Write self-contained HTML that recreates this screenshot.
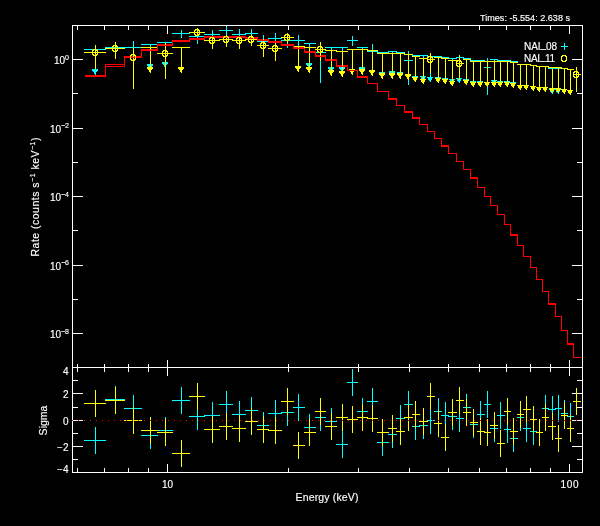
<!DOCTYPE html>
<html><head><meta charset="utf-8"><title>Spectrum</title>
<style>html,body{margin:0;padding:0;background:#000;}svg{display:block;}</style></head>
<body><svg width="600" height="526" viewBox="0 0 600 526">
<rect width="600" height="526" fill="#000"/>
<g shape-rendering="crispEdges">
<rect x="72.5" y="25.5" width="510" height="447" fill="none" stroke="#ffffff"/>
<line x1="72.0" y1="367.5" x2="583.0" y2="367.5" stroke="#ffffff" stroke-width="1"/>
<line x1="77.5" y1="25.0" x2="77.5" y2="30.0" stroke="#ffffff" stroke-width="1"/>
<line x1="77.5" y1="468.0" x2="77.5" y2="472.0" stroke="#ffffff" stroke-width="1"/>
<line x1="77.5" y1="364.0" x2="77.5" y2="372.0" stroke="#ffffff" stroke-width="1"/>
<line x1="104.5" y1="25.0" x2="104.5" y2="30.0" stroke="#ffffff" stroke-width="1"/>
<line x1="104.5" y1="468.0" x2="104.5" y2="472.0" stroke="#ffffff" stroke-width="1"/>
<line x1="104.5" y1="364.0" x2="104.5" y2="372.0" stroke="#ffffff" stroke-width="1"/>
<line x1="128.5" y1="25.0" x2="128.5" y2="30.0" stroke="#ffffff" stroke-width="1"/>
<line x1="128.5" y1="468.0" x2="128.5" y2="472.0" stroke="#ffffff" stroke-width="1"/>
<line x1="128.5" y1="364.0" x2="128.5" y2="372.0" stroke="#ffffff" stroke-width="1"/>
<line x1="148.5" y1="25.0" x2="148.5" y2="30.0" stroke="#ffffff" stroke-width="1"/>
<line x1="148.5" y1="468.0" x2="148.5" y2="472.0" stroke="#ffffff" stroke-width="1"/>
<line x1="148.5" y1="364.0" x2="148.5" y2="372.0" stroke="#ffffff" stroke-width="1"/>
<line x1="167.5" y1="25.0" x2="167.5" y2="34.0" stroke="#ffffff" stroke-width="1"/>
<line x1="167.5" y1="464.0" x2="167.5" y2="472.0" stroke="#ffffff" stroke-width="1"/>
<line x1="167.5" y1="360.0" x2="167.5" y2="376.0" stroke="#ffffff" stroke-width="1"/>
<line x1="288.5" y1="25.0" x2="288.5" y2="30.0" stroke="#ffffff" stroke-width="1"/>
<line x1="288.5" y1="468.0" x2="288.5" y2="472.0" stroke="#ffffff" stroke-width="1"/>
<line x1="288.5" y1="364.0" x2="288.5" y2="372.0" stroke="#ffffff" stroke-width="1"/>
<line x1="358.5" y1="25.0" x2="358.5" y2="30.0" stroke="#ffffff" stroke-width="1"/>
<line x1="358.5" y1="468.0" x2="358.5" y2="472.0" stroke="#ffffff" stroke-width="1"/>
<line x1="358.5" y1="364.0" x2="358.5" y2="372.0" stroke="#ffffff" stroke-width="1"/>
<line x1="409.5" y1="25.0" x2="409.5" y2="30.0" stroke="#ffffff" stroke-width="1"/>
<line x1="409.5" y1="468.0" x2="409.5" y2="472.0" stroke="#ffffff" stroke-width="1"/>
<line x1="409.5" y1="364.0" x2="409.5" y2="372.0" stroke="#ffffff" stroke-width="1"/>
<line x1="448.5" y1="25.0" x2="448.5" y2="30.0" stroke="#ffffff" stroke-width="1"/>
<line x1="448.5" y1="468.0" x2="448.5" y2="472.0" stroke="#ffffff" stroke-width="1"/>
<line x1="448.5" y1="364.0" x2="448.5" y2="372.0" stroke="#ffffff" stroke-width="1"/>
<line x1="479.5" y1="25.0" x2="479.5" y2="30.0" stroke="#ffffff" stroke-width="1"/>
<line x1="479.5" y1="468.0" x2="479.5" y2="472.0" stroke="#ffffff" stroke-width="1"/>
<line x1="479.5" y1="364.0" x2="479.5" y2="372.0" stroke="#ffffff" stroke-width="1"/>
<line x1="506.5" y1="25.0" x2="506.5" y2="30.0" stroke="#ffffff" stroke-width="1"/>
<line x1="506.5" y1="468.0" x2="506.5" y2="472.0" stroke="#ffffff" stroke-width="1"/>
<line x1="506.5" y1="364.0" x2="506.5" y2="372.0" stroke="#ffffff" stroke-width="1"/>
<line x1="530.5" y1="25.0" x2="530.5" y2="30.0" stroke="#ffffff" stroke-width="1"/>
<line x1="530.5" y1="468.0" x2="530.5" y2="472.0" stroke="#ffffff" stroke-width="1"/>
<line x1="530.5" y1="364.0" x2="530.5" y2="372.0" stroke="#ffffff" stroke-width="1"/>
<line x1="550.5" y1="25.0" x2="550.5" y2="30.0" stroke="#ffffff" stroke-width="1"/>
<line x1="550.5" y1="468.0" x2="550.5" y2="472.0" stroke="#ffffff" stroke-width="1"/>
<line x1="550.5" y1="364.0" x2="550.5" y2="372.0" stroke="#ffffff" stroke-width="1"/>
<line x1="569.5" y1="25.0" x2="569.5" y2="34.0" stroke="#ffffff" stroke-width="1"/>
<line x1="569.5" y1="464.0" x2="569.5" y2="472.0" stroke="#ffffff" stroke-width="1"/>
<line x1="569.5" y1="360.0" x2="569.5" y2="376.0" stroke="#ffffff" stroke-width="1"/>
<line x1="72.0" y1="333.5" x2="83.0" y2="333.5" stroke="#ffffff" stroke-width="1"/>
<line x1="572.0" y1="333.5" x2="583.0" y2="333.5" stroke="#ffffff" stroke-width="1"/>
<line x1="72.0" y1="299.5" x2="78.0" y2="299.5" stroke="#ffffff" stroke-width="1"/>
<line x1="577.0" y1="299.5" x2="583.0" y2="299.5" stroke="#ffffff" stroke-width="1"/>
<line x1="72.0" y1="265.5" x2="83.0" y2="265.5" stroke="#ffffff" stroke-width="1"/>
<line x1="572.0" y1="265.5" x2="583.0" y2="265.5" stroke="#ffffff" stroke-width="1"/>
<line x1="72.0" y1="230.5" x2="78.0" y2="230.5" stroke="#ffffff" stroke-width="1"/>
<line x1="577.0" y1="230.5" x2="583.0" y2="230.5" stroke="#ffffff" stroke-width="1"/>
<line x1="72.0" y1="196.5" x2="83.0" y2="196.5" stroke="#ffffff" stroke-width="1"/>
<line x1="572.0" y1="196.5" x2="583.0" y2="196.5" stroke="#ffffff" stroke-width="1"/>
<line x1="72.0" y1="162.5" x2="78.0" y2="162.5" stroke="#ffffff" stroke-width="1"/>
<line x1="577.0" y1="162.5" x2="583.0" y2="162.5" stroke="#ffffff" stroke-width="1"/>
<line x1="72.0" y1="128.5" x2="83.0" y2="128.5" stroke="#ffffff" stroke-width="1"/>
<line x1="572.0" y1="128.5" x2="583.0" y2="128.5" stroke="#ffffff" stroke-width="1"/>
<line x1="72.0" y1="93.5" x2="78.0" y2="93.5" stroke="#ffffff" stroke-width="1"/>
<line x1="577.0" y1="93.5" x2="583.0" y2="93.5" stroke="#ffffff" stroke-width="1"/>
<line x1="72.0" y1="59.5" x2="83.0" y2="59.5" stroke="#ffffff" stroke-width="1"/>
<line x1="572.0" y1="59.5" x2="583.0" y2="59.5" stroke="#ffffff" stroke-width="1"/>
<line x1="72.0" y1="459.5" x2="78.0" y2="459.5" stroke="#ffffff" stroke-width="1"/>
<line x1="577.0" y1="459.5" x2="583.0" y2="459.5" stroke="#ffffff" stroke-width="1"/>
<line x1="72.0" y1="446.5" x2="83.0" y2="446.5" stroke="#ffffff" stroke-width="1"/>
<line x1="572.0" y1="446.5" x2="583.0" y2="446.5" stroke="#ffffff" stroke-width="1"/>
<line x1="72.0" y1="433.5" x2="78.0" y2="433.5" stroke="#ffffff" stroke-width="1"/>
<line x1="577.0" y1="433.5" x2="583.0" y2="433.5" stroke="#ffffff" stroke-width="1"/>
<line x1="72.0" y1="420.5" x2="83.0" y2="420.5" stroke="#ffffff" stroke-width="1"/>
<line x1="572.0" y1="420.5" x2="583.0" y2="420.5" stroke="#ffffff" stroke-width="1"/>
<line x1="72.0" y1="407.5" x2="78.0" y2="407.5" stroke="#ffffff" stroke-width="1"/>
<line x1="577.0" y1="407.5" x2="583.0" y2="407.5" stroke="#ffffff" stroke-width="1"/>
<line x1="72.0" y1="393.5" x2="83.0" y2="393.5" stroke="#ffffff" stroke-width="1"/>
<line x1="572.0" y1="393.5" x2="583.0" y2="393.5" stroke="#ffffff" stroke-width="1"/>
<line x1="72.0" y1="380.5" x2="78.0" y2="380.5" stroke="#ffffff" stroke-width="1"/>
<line x1="577.0" y1="380.5" x2="583.0" y2="380.5" stroke="#ffffff" stroke-width="1"/>
</g>
<g shape-rendering="crispEdges">
<line x1="84.0" y1="49.5" x2="106.0" y2="49.5" stroke="#00ffff" stroke-width="1"/>
<line x1="95.5" y1="49.0" x2="95.5" y2="75.0" stroke="#00ffff" stroke-width="1"/>
<polygon points="91.6,69 98.4,69 95,75.2" fill="#00ffff"/>
<line x1="105.0" y1="47.5" x2="125.0" y2="47.5" stroke="#00ffff" stroke-width="1"/>
<line x1="115.5" y1="42.0" x2="115.5" y2="56.0" stroke="#00ffff" stroke-width="1"/>
<line x1="124.0" y1="47.5" x2="142.0" y2="47.5" stroke="#00ffff" stroke-width="1"/>
<line x1="133.5" y1="40.8" x2="133.5" y2="60.0" stroke="#00ffff" stroke-width="1"/>
<line x1="141.0" y1="44.5" x2="158.0" y2="44.5" stroke="#00ffff" stroke-width="1"/>
<line x1="150.5" y1="44.0" x2="150.5" y2="70.0" stroke="#00ffff" stroke-width="1"/>
<polygon points="146.6,64 153.4,64 150,70.2" fill="#00ffff"/>
<line x1="157.0" y1="42.5" x2="173.0" y2="42.5" stroke="#00ffff" stroke-width="1"/>
<line x1="165.5" y1="42.0" x2="165.5" y2="68.0" stroke="#00ffff" stroke-width="1"/>
<polygon points="161.6,62 168.4,62 165,68.2" fill="#00ffff"/>
<line x1="172.0" y1="33.5" x2="190.0" y2="33.5" stroke="#00ffff" stroke-width="1"/>
<line x1="181.5" y1="30.0" x2="181.5" y2="37.5" stroke="#00ffff" stroke-width="1"/>
<line x1="189.0" y1="36.5" x2="205.0" y2="36.5" stroke="#00ffff" stroke-width="1"/>
<line x1="197.5" y1="29.0" x2="197.5" y2="43.7" stroke="#00ffff" stroke-width="1"/>
<line x1="204.0" y1="34.5" x2="220.0" y2="34.5" stroke="#00ffff" stroke-width="1"/>
<line x1="212.5" y1="30.0" x2="212.5" y2="39.0" stroke="#00ffff" stroke-width="1"/>
<line x1="219.0" y1="30.5" x2="233.0" y2="30.5" stroke="#00ffff" stroke-width="1"/>
<line x1="226.5" y1="25.8" x2="226.5" y2="35.0" stroke="#00ffff" stroke-width="1"/>
<line x1="232.0" y1="34.5" x2="246.0" y2="34.5" stroke="#00ffff" stroke-width="1"/>
<line x1="239.5" y1="28.7" x2="239.5" y2="39.0" stroke="#00ffff" stroke-width="1"/>
<line x1="245.0" y1="33.5" x2="258.0" y2="33.5" stroke="#00ffff" stroke-width="1"/>
<line x1="251.5" y1="29.2" x2="251.5" y2="37.5" stroke="#00ffff" stroke-width="1"/>
<line x1="257.0" y1="41.5" x2="269.0" y2="41.5" stroke="#00ffff" stroke-width="1"/>
<line x1="263.5" y1="35.0" x2="263.5" y2="50.0" stroke="#00ffff" stroke-width="1"/>
<line x1="268.0" y1="38.5" x2="282.0" y2="38.5" stroke="#00ffff" stroke-width="1"/>
<line x1="275.5" y1="32.5" x2="275.5" y2="45.0" stroke="#00ffff" stroke-width="1"/>
<line x1="281.0" y1="40.5" x2="294.0" y2="40.5" stroke="#00ffff" stroke-width="1"/>
<line x1="287.5" y1="36.0" x2="287.5" y2="48.3" stroke="#00ffff" stroke-width="1"/>
<line x1="293.0" y1="40.5" x2="305.0" y2="40.5" stroke="#00ffff" stroke-width="1"/>
<line x1="298.5" y1="35.0" x2="298.5" y2="48.0" stroke="#00ffff" stroke-width="1"/>
<line x1="304.0" y1="43.5" x2="316.0" y2="43.5" stroke="#00ffff" stroke-width="1"/>
<line x1="309.5" y1="43.0" x2="309.5" y2="69.0" stroke="#00ffff" stroke-width="1"/>
<polygon points="305.6,63 312.4,63 309,69.2" fill="#00ffff"/>
<line x1="315.0" y1="52.5" x2="326.0" y2="52.5" stroke="#00ffff" stroke-width="1"/>
<line x1="320.5" y1="42.0" x2="320.5" y2="82.5" stroke="#00ffff" stroke-width="1"/>
<line x1="325.0" y1="47.5" x2="337.0" y2="47.5" stroke="#00ffff" stroke-width="1"/>
<line x1="331.5" y1="47.0" x2="331.5" y2="73.0" stroke="#00ffff" stroke-width="1"/>
<polygon points="327.6,67 334.4,67 331,73.2" fill="#00ffff"/>
<line x1="336.0" y1="47.5" x2="348.0" y2="47.5" stroke="#00ffff" stroke-width="1"/>
<line x1="342.5" y1="47.0" x2="342.5" y2="73.0" stroke="#00ffff" stroke-width="1"/>
<polygon points="338.6,67 345.4,67 342,73.2" fill="#00ffff"/>
<line x1="347.0" y1="40.5" x2="358.0" y2="40.5" stroke="#00ffff" stroke-width="1"/>
<line x1="352.5" y1="36.0" x2="352.5" y2="46.0" stroke="#00ffff" stroke-width="1"/>
<line x1="357.0" y1="47.5" x2="368.0" y2="47.5" stroke="#00ffff" stroke-width="1"/>
<line x1="362.5" y1="47.0" x2="362.5" y2="73.0" stroke="#00ffff" stroke-width="1"/>
<polygon points="358.6,67 365.4,67 362,73.2" fill="#00ffff"/>
<line x1="367.0" y1="51.5" x2="378.0" y2="51.5" stroke="#00ffff" stroke-width="1"/>
<line x1="372.5" y1="44.0" x2="372.5" y2="65.0" stroke="#00ffff" stroke-width="1"/>
<line x1="377.0" y1="52.5" x2="389.0" y2="52.5" stroke="#00ffff" stroke-width="1"/>
<line x1="382.5" y1="52.0" x2="382.5" y2="78.0" stroke="#00ffff" stroke-width="1"/>
<polygon points="378.6,72 385.4,72 382,78.2" fill="#00ffff"/>
<line x1="388.0" y1="51.5" x2="397.0" y2="51.5" stroke="#00ffff" stroke-width="1"/>
<line x1="392.5" y1="51.0" x2="392.5" y2="77.0" stroke="#00ffff" stroke-width="1"/>
<polygon points="388.6,71 395.4,71 392,77.2" fill="#00ffff"/>
<line x1="396.0" y1="52.5" x2="405.0" y2="52.5" stroke="#00ffff" stroke-width="1"/>
<line x1="400.5" y1="52.0" x2="400.5" y2="78.0" stroke="#00ffff" stroke-width="1"/>
<polygon points="396.6,72 403.4,72 400,78.2" fill="#00ffff"/>
<line x1="404.0" y1="60.5" x2="413.0" y2="60.5" stroke="#00ffff" stroke-width="1"/>
<line x1="408.5" y1="51.0" x2="408.5" y2="85.0" stroke="#00ffff" stroke-width="1"/>
<line x1="412.0" y1="55.5" x2="420.0" y2="55.5" stroke="#00ffff" stroke-width="1"/>
<line x1="415.5" y1="55.0" x2="415.5" y2="81.0" stroke="#00ffff" stroke-width="1"/>
<polygon points="411.6,76 418.4,76 415,81.2" fill="#00ffff"/>
<line x1="419.0" y1="55.5" x2="428.0" y2="55.5" stroke="#00ffff" stroke-width="1"/>
<line x1="423.5" y1="55.0" x2="423.5" y2="81.0" stroke="#00ffff" stroke-width="1"/>
<polygon points="419.6,76 426.4,76 423,81.2" fill="#00ffff"/>
<line x1="427.0" y1="56.5" x2="435.0" y2="56.5" stroke="#00ffff" stroke-width="1"/>
<line x1="430.5" y1="56.0" x2="430.5" y2="82.0" stroke="#00ffff" stroke-width="1"/>
<polygon points="426.6,77 433.4,77 430,82.2" fill="#00ffff"/>
<line x1="434.0" y1="56.5" x2="442.0" y2="56.5" stroke="#00ffff" stroke-width="1"/>
<line x1="438.5" y1="56.0" x2="438.5" y2="82.0" stroke="#00ffff" stroke-width="1"/>
<polygon points="434.6,77 441.4,77 438,82.2" fill="#00ffff"/>
<line x1="441.0" y1="57.5" x2="449.0" y2="57.5" stroke="#00ffff" stroke-width="1"/>
<line x1="445.5" y1="57.0" x2="445.5" y2="83.0" stroke="#00ffff" stroke-width="1"/>
<polygon points="441.6,78 448.4,78 445,83.2" fill="#00ffff"/>
<line x1="448.0" y1="58.5" x2="457.0" y2="58.5" stroke="#00ffff" stroke-width="1"/>
<line x1="452.5" y1="58.0" x2="452.5" y2="84.0" stroke="#00ffff" stroke-width="1"/>
<polygon points="448.6,79 455.4,79 452,84.2" fill="#00ffff"/>
<line x1="456.0" y1="57.5" x2="464.0" y2="57.5" stroke="#00ffff" stroke-width="1"/>
<line x1="459.5" y1="57.0" x2="459.5" y2="83.0" stroke="#00ffff" stroke-width="1"/>
<polygon points="455.6,78 462.4,78 459,83.2" fill="#00ffff"/>
<line x1="463.0" y1="58.5" x2="471.0" y2="58.5" stroke="#00ffff" stroke-width="1"/>
<line x1="466.5" y1="58.0" x2="466.5" y2="84.0" stroke="#00ffff" stroke-width="1"/>
<polygon points="462.6,79 469.4,79 466,84.2" fill="#00ffff"/>
<line x1="470.0" y1="60.5" x2="478.0" y2="60.5" stroke="#00ffff" stroke-width="1"/>
<line x1="473.5" y1="60.0" x2="473.5" y2="86.0" stroke="#00ffff" stroke-width="1"/>
<polygon points="469.6,81 476.4,81 473,86.2" fill="#00ffff"/>
<line x1="477.0" y1="60.5" x2="485.0" y2="60.5" stroke="#00ffff" stroke-width="1"/>
<line x1="480.5" y1="60.0" x2="480.5" y2="86.0" stroke="#00ffff" stroke-width="1"/>
<polygon points="476.6,81 483.4,81 480,86.2" fill="#00ffff"/>
<line x1="484.0" y1="67.5" x2="491.0" y2="67.5" stroke="#00ffff" stroke-width="1"/>
<line x1="487.5" y1="58.0" x2="487.5" y2="95.0" stroke="#00ffff" stroke-width="1"/>
<line x1="490.0" y1="59.5" x2="498.0" y2="59.5" stroke="#00ffff" stroke-width="1"/>
<line x1="494.5" y1="59.0" x2="494.5" y2="85.0" stroke="#00ffff" stroke-width="1"/>
<polygon points="490.6,80 497.4,80 494,85.2" fill="#00ffff"/>
<line x1="497.0" y1="60.5" x2="505.0" y2="60.5" stroke="#00ffff" stroke-width="1"/>
<line x1="500.5" y1="60.0" x2="500.5" y2="86.0" stroke="#00ffff" stroke-width="1"/>
<polygon points="496.6,81 503.4,81 500,86.2" fill="#00ffff"/>
<line x1="504.0" y1="60.5" x2="511.0" y2="60.5" stroke="#00ffff" stroke-width="1"/>
<line x1="507.5" y1="60.0" x2="507.5" y2="86.0" stroke="#00ffff" stroke-width="1"/>
<polygon points="503.6,81 510.4,81 507,86.2" fill="#00ffff"/>
<line x1="510.0" y1="61.5" x2="518.0" y2="61.5" stroke="#00ffff" stroke-width="1"/>
<line x1="513.5" y1="61.0" x2="513.5" y2="87.0" stroke="#00ffff" stroke-width="1"/>
<polygon points="509.6,82 516.4,82 513,87.2" fill="#00ffff"/>
<line x1="517.0" y1="64.5" x2="524.0" y2="64.5" stroke="#00ffff" stroke-width="1"/>
<line x1="520.5" y1="64.0" x2="520.5" y2="90.0" stroke="#00ffff" stroke-width="1"/>
<polygon points="516.6,85 523.4,85 520,90.2" fill="#00ffff"/>
<line x1="523.0" y1="64.5" x2="531.0" y2="64.5" stroke="#00ffff" stroke-width="1"/>
<line x1="526.5" y1="64.0" x2="526.5" y2="90.0" stroke="#00ffff" stroke-width="1"/>
<polygon points="522.6,85 529.4,85 526,90.2" fill="#00ffff"/>
<line x1="530.0" y1="65.5" x2="537.0" y2="65.5" stroke="#00ffff" stroke-width="1"/>
<line x1="533.5" y1="65.0" x2="533.5" y2="91.0" stroke="#00ffff" stroke-width="1"/>
<polygon points="529.6,86 536.4,86 533,91.2" fill="#00ffff"/>
<line x1="536.0" y1="66.5" x2="543.0" y2="66.5" stroke="#00ffff" stroke-width="1"/>
<line x1="539.5" y1="66.0" x2="539.5" y2="92.0" stroke="#00ffff" stroke-width="1"/>
<polygon points="535.6,87 542.4,87 539,92.2" fill="#00ffff"/>
<line x1="542.0" y1="66.5" x2="549.0" y2="66.5" stroke="#00ffff" stroke-width="1"/>
<line x1="545.5" y1="66.0" x2="545.5" y2="92.0" stroke="#00ffff" stroke-width="1"/>
<polygon points="541.6,87 548.4,87 545,92.2" fill="#00ffff"/>
<line x1="548.0" y1="68.5" x2="556.0" y2="68.5" stroke="#00ffff" stroke-width="1"/>
<line x1="552.5" y1="68.0" x2="552.5" y2="94.0" stroke="#00ffff" stroke-width="1"/>
<polygon points="548.6,89 555.4,89 552,94.2" fill="#00ffff"/>
<line x1="555.0" y1="68.5" x2="562.0" y2="68.5" stroke="#00ffff" stroke-width="1"/>
<line x1="558.5" y1="68.0" x2="558.5" y2="94.0" stroke="#00ffff" stroke-width="1"/>
<polygon points="554.6,89 561.4,89 558,94.2" fill="#00ffff"/>
<line x1="561.0" y1="68.5" x2="568.0" y2="68.5" stroke="#00ffff" stroke-width="1"/>
<line x1="564.5" y1="68.0" x2="564.5" y2="94.0" stroke="#00ffff" stroke-width="1"/>
<polygon points="560.6,89 567.4,89 564,94.2" fill="#00ffff"/>
<line x1="567.0" y1="69.5" x2="574.0" y2="69.5" stroke="#00ffff" stroke-width="1"/>
<line x1="570.5" y1="69.0" x2="570.5" y2="95.0" stroke="#00ffff" stroke-width="1"/>
<polygon points="566.6,90 573.4,90 570,95.2" fill="#00ffff"/>
<polyline points="84.5,75.5 105.5,75.5 105.5,64.5 124.5,64.5 124.5,56.5 141.5,56.5 141.5,49.5 157.5,49.5 157.5,44.5 172.5,44.5 172.5,40.5 189.5,40.5 189.5,38.5 204.5,38.5 204.5,36.5 219.5,36.5 219.5,36.5 232.5,36.5 232.5,36.5 245.5,36.5 245.5,37.5 257.5,37.5 257.5,39.5 268.5,39.5 268.5,41.5 281.5,41.5 281.5,44.5 293.5,44.5 293.5,47.5 304.5,47.5 304.5,51.5 315.5,51.5 315.5,55.5 325.5,55.5 325.5,59.5 336.5,59.5 336.5,65.5 347.5,65.5 347.5,70.5 357.5,70.5 357.5,76.5 367.5,76.5 367.5,83.5 377.5,83.5 377.5,91.5 388.5,91.5 388.5,98.5 396.5,98.5 396.5,105.5 404.5,105.5 404.5,111.5 412.5,111.5 412.5,117.5 419.5,117.5 419.5,124.5 427.5,124.5 427.5,131.5 434.5,131.5 434.5,138.5 441.5,138.5 441.5,145.5 448.5,145.5 448.5,153.5 456.5,153.5 456.5,161.5 463.5,161.5 463.5,169.5 470.5,169.5 470.5,177.5 477.5,177.5 477.5,187.5 484.5,187.5 484.5,196.5 490.5,196.5 490.5,205.5 497.5,205.5 497.5,214.5 504.5,214.5 504.5,224.5 510.5,224.5 510.5,234.5 517.5,234.5 517.5,245.5 523.5,245.5 523.5,256.5 530.5,256.5 530.5,267.5 536.5,267.5 536.5,279.5 542.5,279.5 542.5,291.5 548.5,291.5 548.5,303.5 555.5,303.5 555.5,316.5 561.5,316.5 561.5,330.5 567.5,330.5 567.5,343.5 573.5,343.5 573.5,357.5 580.5,357.5" fill="none" stroke="#ff0000" stroke-width="1" shape-rendering="crispEdges"/>
<line x1="84.0" y1="52.5" x2="106.0" y2="52.5" stroke="#ffff00" stroke-width="1"/>
<line x1="95.5" y1="45.0" x2="95.5" y2="69.0" stroke="#ffff00" stroke-width="1"/>
<line x1="105.0" y1="48.5" x2="125.0" y2="48.5" stroke="#ffff00" stroke-width="1"/>
<line x1="115.5" y1="41.7" x2="115.5" y2="58.8" stroke="#ffff00" stroke-width="1"/>
<line x1="124.0" y1="57.5" x2="142.0" y2="57.5" stroke="#ffff00" stroke-width="1"/>
<line x1="133.5" y1="47.5" x2="133.5" y2="88.8" stroke="#ffff00" stroke-width="1"/>
<line x1="141.0" y1="47.5" x2="158.0" y2="47.5" stroke="#ffff00" stroke-width="1"/>
<line x1="150.5" y1="47.0" x2="150.5" y2="73.0" stroke="#ffff00" stroke-width="1"/>
<polygon points="146.6,67 153.4,67 150,73.2" fill="#ffff00"/>
<line x1="157.0" y1="53.5" x2="173.0" y2="53.5" stroke="#ffff00" stroke-width="1"/>
<line x1="165.5" y1="42.5" x2="165.5" y2="78.7" stroke="#ffff00" stroke-width="1"/>
<line x1="172.0" y1="47.5" x2="190.0" y2="47.5" stroke="#ffff00" stroke-width="1"/>
<line x1="181.5" y1="47.0" x2="181.5" y2="73.0" stroke="#ffff00" stroke-width="1"/>
<polygon points="177.6,67 184.4,67 181,73.2" fill="#ffff00"/>
<line x1="189.0" y1="32.5" x2="205.0" y2="32.5" stroke="#ffff00" stroke-width="1"/>
<line x1="197.5" y1="28.0" x2="197.5" y2="36.0" stroke="#ffff00" stroke-width="1"/>
<line x1="204.0" y1="40.5" x2="220.0" y2="40.5" stroke="#ffff00" stroke-width="1"/>
<line x1="212.5" y1="36.7" x2="212.5" y2="48.7" stroke="#ffff00" stroke-width="1"/>
<line x1="219.0" y1="39.5" x2="233.0" y2="39.5" stroke="#ffff00" stroke-width="1"/>
<line x1="226.5" y1="35.0" x2="226.5" y2="46.7" stroke="#ffff00" stroke-width="1"/>
<line x1="232.0" y1="40.5" x2="246.0" y2="40.5" stroke="#ffff00" stroke-width="1"/>
<line x1="239.5" y1="36.7" x2="239.5" y2="48.7" stroke="#ffff00" stroke-width="1"/>
<line x1="245.0" y1="39.5" x2="258.0" y2="39.5" stroke="#ffff00" stroke-width="1"/>
<line x1="251.5" y1="35.0" x2="251.5" y2="45.8" stroke="#ffff00" stroke-width="1"/>
<line x1="257.0" y1="45.5" x2="269.0" y2="45.5" stroke="#ffff00" stroke-width="1"/>
<line x1="263.5" y1="39.2" x2="263.5" y2="56.7" stroke="#ffff00" stroke-width="1"/>
<line x1="268.0" y1="48.5" x2="282.0" y2="48.5" stroke="#ffff00" stroke-width="1"/>
<line x1="275.5" y1="41.7" x2="275.5" y2="60.8" stroke="#ffff00" stroke-width="1"/>
<line x1="281.0" y1="37.5" x2="294.0" y2="37.5" stroke="#ffff00" stroke-width="1"/>
<line x1="287.5" y1="32.5" x2="287.5" y2="43.0" stroke="#ffff00" stroke-width="1"/>
<line x1="293.0" y1="46.5" x2="305.0" y2="46.5" stroke="#ffff00" stroke-width="1"/>
<line x1="298.5" y1="46.0" x2="298.5" y2="72.0" stroke="#ffff00" stroke-width="1"/>
<polygon points="294.6,66 301.4,66 298,72.2" fill="#ffff00"/>
<line x1="304.0" y1="47.5" x2="316.0" y2="47.5" stroke="#ffff00" stroke-width="1"/>
<line x1="309.5" y1="47.0" x2="309.5" y2="73.0" stroke="#ffff00" stroke-width="1"/>
<polygon points="305.6,67 312.4,67 309,73.2" fill="#ffff00"/>
<line x1="315.0" y1="49.5" x2="326.0" y2="49.5" stroke="#ffff00" stroke-width="1"/>
<line x1="320.5" y1="41.7" x2="320.5" y2="60.8" stroke="#ffff00" stroke-width="1"/>
<line x1="325.0" y1="50.5" x2="337.0" y2="50.5" stroke="#ffff00" stroke-width="1"/>
<line x1="331.5" y1="50.0" x2="331.5" y2="76.0" stroke="#ffff00" stroke-width="1"/>
<polygon points="327.6,70 334.4,70 331,76.2" fill="#ffff00"/>
<line x1="336.0" y1="51.5" x2="348.0" y2="51.5" stroke="#ffff00" stroke-width="1"/>
<line x1="342.5" y1="51.0" x2="342.5" y2="77.0" stroke="#ffff00" stroke-width="1"/>
<polygon points="338.6,71 345.4,71 342,77.2" fill="#ffff00"/>
<line x1="347.0" y1="49.5" x2="358.0" y2="49.5" stroke="#ffff00" stroke-width="1"/>
<line x1="352.5" y1="49.0" x2="352.5" y2="75.0" stroke="#ffff00" stroke-width="1"/>
<polygon points="348.6,69 355.4,69 352,75.2" fill="#ffff00"/>
<line x1="357.0" y1="49.5" x2="368.0" y2="49.5" stroke="#ffff00" stroke-width="1"/>
<line x1="362.5" y1="49.0" x2="362.5" y2="75.0" stroke="#ffff00" stroke-width="1"/>
<polygon points="358.6,69 365.4,69 362,75.2" fill="#ffff00"/>
<line x1="367.0" y1="50.5" x2="378.0" y2="50.5" stroke="#ffff00" stroke-width="1"/>
<line x1="372.5" y1="50.0" x2="372.5" y2="76.0" stroke="#ffff00" stroke-width="1"/>
<polygon points="368.6,70 375.4,70 372,76.2" fill="#ffff00"/>
<line x1="377.0" y1="53.5" x2="389.0" y2="53.5" stroke="#ffff00" stroke-width="1"/>
<line x1="382.5" y1="53.0" x2="382.5" y2="79.0" stroke="#ffff00" stroke-width="1"/>
<polygon points="378.6,73 385.4,73 382,79.2" fill="#ffff00"/>
<line x1="388.0" y1="53.5" x2="397.0" y2="53.5" stroke="#ffff00" stroke-width="1"/>
<line x1="392.5" y1="53.0" x2="392.5" y2="79.0" stroke="#ffff00" stroke-width="1"/>
<polygon points="388.6,73 395.4,73 392,79.2" fill="#ffff00"/>
<line x1="396.0" y1="53.5" x2="405.0" y2="53.5" stroke="#ffff00" stroke-width="1"/>
<line x1="400.5" y1="53.0" x2="400.5" y2="79.0" stroke="#ffff00" stroke-width="1"/>
<polygon points="396.6,73 403.4,73 400,79.2" fill="#ffff00"/>
<line x1="404.0" y1="54.5" x2="413.0" y2="54.5" stroke="#ffff00" stroke-width="1"/>
<line x1="408.5" y1="54.0" x2="408.5" y2="80.0" stroke="#ffff00" stroke-width="1"/>
<polygon points="404.6,74 411.4,74 408,80.2" fill="#ffff00"/>
<line x1="412.0" y1="56.5" x2="420.0" y2="56.5" stroke="#ffff00" stroke-width="1"/>
<line x1="415.5" y1="56.0" x2="415.5" y2="82.0" stroke="#ffff00" stroke-width="1"/>
<polygon points="411.6,77 418.4,77 415,82.2" fill="#ffff00"/>
<line x1="419.0" y1="58.5" x2="428.0" y2="58.5" stroke="#ffff00" stroke-width="1"/>
<line x1="423.5" y1="58.0" x2="423.5" y2="84.0" stroke="#ffff00" stroke-width="1"/>
<polygon points="419.6,79 426.4,79 423,84.2" fill="#ffff00"/>
<line x1="427.0" y1="59.5" x2="435.0" y2="59.5" stroke="#ffff00" stroke-width="1"/>
<line x1="430.5" y1="53.0" x2="430.5" y2="72.5" stroke="#ffff00" stroke-width="1"/>
<line x1="434.0" y1="57.5" x2="442.0" y2="57.5" stroke="#ffff00" stroke-width="1"/>
<line x1="438.5" y1="57.0" x2="438.5" y2="83.0" stroke="#ffff00" stroke-width="1"/>
<polygon points="434.6,78 441.4,78 438,83.2" fill="#ffff00"/>
<line x1="441.0" y1="58.5" x2="449.0" y2="58.5" stroke="#ffff00" stroke-width="1"/>
<line x1="445.5" y1="58.0" x2="445.5" y2="84.0" stroke="#ffff00" stroke-width="1"/>
<polygon points="441.6,79 448.4,79 445,84.2" fill="#ffff00"/>
<line x1="448.0" y1="60.5" x2="457.0" y2="60.5" stroke="#ffff00" stroke-width="1"/>
<line x1="452.5" y1="60.0" x2="452.5" y2="86.0" stroke="#ffff00" stroke-width="1"/>
<polygon points="448.6,81 455.4,81 452,86.2" fill="#ffff00"/>
<line x1="456.0" y1="63.5" x2="464.0" y2="63.5" stroke="#ffff00" stroke-width="1"/>
<line x1="459.5" y1="55.0" x2="459.5" y2="79.5" stroke="#ffff00" stroke-width="1"/>
<line x1="463.0" y1="59.5" x2="471.0" y2="59.5" stroke="#ffff00" stroke-width="1"/>
<line x1="466.5" y1="59.0" x2="466.5" y2="85.0" stroke="#ffff00" stroke-width="1"/>
<polygon points="462.6,80 469.4,80 466,85.2" fill="#ffff00"/>
<line x1="470.0" y1="61.5" x2="478.0" y2="61.5" stroke="#ffff00" stroke-width="1"/>
<line x1="473.5" y1="61.0" x2="473.5" y2="87.0" stroke="#ffff00" stroke-width="1"/>
<polygon points="469.6,82 476.4,82 473,87.2" fill="#ffff00"/>
<line x1="477.0" y1="61.5" x2="485.0" y2="61.5" stroke="#ffff00" stroke-width="1"/>
<line x1="480.5" y1="61.0" x2="480.5" y2="87.0" stroke="#ffff00" stroke-width="1"/>
<polygon points="476.6,82 483.4,82 480,87.2" fill="#ffff00"/>
<line x1="484.0" y1="61.5" x2="491.0" y2="61.5" stroke="#ffff00" stroke-width="1"/>
<line x1="487.5" y1="61.0" x2="487.5" y2="87.0" stroke="#ffff00" stroke-width="1"/>
<polygon points="483.6,82 490.4,82 487,87.2" fill="#ffff00"/>
<line x1="490.0" y1="61.5" x2="498.0" y2="61.5" stroke="#ffff00" stroke-width="1"/>
<line x1="494.5" y1="61.0" x2="494.5" y2="87.0" stroke="#ffff00" stroke-width="1"/>
<polygon points="490.6,82 497.4,82 494,87.2" fill="#ffff00"/>
<line x1="497.0" y1="61.5" x2="505.0" y2="61.5" stroke="#ffff00" stroke-width="1"/>
<line x1="500.5" y1="61.0" x2="500.5" y2="87.0" stroke="#ffff00" stroke-width="1"/>
<polygon points="496.6,82 503.4,82 500,87.2" fill="#ffff00"/>
<line x1="504.0" y1="61.5" x2="511.0" y2="61.5" stroke="#ffff00" stroke-width="1"/>
<line x1="507.5" y1="61.0" x2="507.5" y2="87.0" stroke="#ffff00" stroke-width="1"/>
<polygon points="503.6,82 510.4,82 507,87.2" fill="#ffff00"/>
<line x1="510.0" y1="62.5" x2="518.0" y2="62.5" stroke="#ffff00" stroke-width="1"/>
<line x1="513.5" y1="62.0" x2="513.5" y2="88.0" stroke="#ffff00" stroke-width="1"/>
<polygon points="509.6,83 516.4,83 513,88.2" fill="#ffff00"/>
<line x1="517.0" y1="64.5" x2="524.0" y2="64.5" stroke="#ffff00" stroke-width="1"/>
<line x1="520.5" y1="64.0" x2="520.5" y2="90.0" stroke="#ffff00" stroke-width="1"/>
<polygon points="516.6,85 523.4,85 520,90.2" fill="#ffff00"/>
<line x1="523.0" y1="64.5" x2="531.0" y2="64.5" stroke="#ffff00" stroke-width="1"/>
<line x1="526.5" y1="64.0" x2="526.5" y2="90.0" stroke="#ffff00" stroke-width="1"/>
<polygon points="522.6,85 529.4,85 526,90.2" fill="#ffff00"/>
<line x1="530.0" y1="65.5" x2="537.0" y2="65.5" stroke="#ffff00" stroke-width="1"/>
<line x1="533.5" y1="65.0" x2="533.5" y2="91.0" stroke="#ffff00" stroke-width="1"/>
<polygon points="529.6,86 536.4,86 533,91.2" fill="#ffff00"/>
<line x1="536.0" y1="66.5" x2="543.0" y2="66.5" stroke="#ffff00" stroke-width="1"/>
<line x1="539.5" y1="66.0" x2="539.5" y2="92.0" stroke="#ffff00" stroke-width="1"/>
<polygon points="535.6,87 542.4,87 539,92.2" fill="#ffff00"/>
<line x1="542.0" y1="66.5" x2="549.0" y2="66.5" stroke="#ffff00" stroke-width="1"/>
<line x1="545.5" y1="66.0" x2="545.5" y2="92.0" stroke="#ffff00" stroke-width="1"/>
<polygon points="541.6,87 548.4,87 545,92.2" fill="#ffff00"/>
<line x1="548.0" y1="67.5" x2="556.0" y2="67.5" stroke="#ffff00" stroke-width="1"/>
<line x1="552.5" y1="67.0" x2="552.5" y2="93.0" stroke="#ffff00" stroke-width="1"/>
<polygon points="548.6,88 555.4,88 552,93.2" fill="#ffff00"/>
<line x1="555.0" y1="67.5" x2="562.0" y2="67.5" stroke="#ffff00" stroke-width="1"/>
<line x1="558.5" y1="67.0" x2="558.5" y2="93.0" stroke="#ffff00" stroke-width="1"/>
<polygon points="554.6,88 561.4,88 558,93.2" fill="#ffff00"/>
<line x1="561.0" y1="68.5" x2="568.0" y2="68.5" stroke="#ffff00" stroke-width="1"/>
<line x1="564.5" y1="68.0" x2="564.5" y2="94.0" stroke="#ffff00" stroke-width="1"/>
<polygon points="560.6,89 567.4,89 564,94.2" fill="#ffff00"/>
<line x1="567.0" y1="69.5" x2="574.0" y2="69.5" stroke="#ffff00" stroke-width="1"/>
<line x1="570.5" y1="69.0" x2="570.5" y2="95.0" stroke="#ffff00" stroke-width="1"/>
<polygon points="566.6,90 573.4,90 570,95.2" fill="#ffff00"/>
<line x1="573.0" y1="74.5" x2="581.0" y2="74.5" stroke="#ffff00" stroke-width="1"/>
<line x1="576.5" y1="67.2" x2="576.5" y2="92.3" stroke="#ffff00" stroke-width="1"/>
</g>
<g shape-rendering="crispEdges">
<line x1="84.0" y1="440.5" x2="106.0" y2="440.5" stroke="#00ffff" stroke-width="1"/>
<line x1="95.5" y1="427.0" x2="95.5" y2="454.0" stroke="#00ffff" stroke-width="1"/>
<line x1="105.0" y1="399.5" x2="125.0" y2="399.5" stroke="#00ffff" stroke-width="1"/>
<line x1="115.5" y1="386.0" x2="115.5" y2="413.0" stroke="#00ffff" stroke-width="1"/>
<line x1="124.0" y1="408.5" x2="142.0" y2="408.5" stroke="#00ffff" stroke-width="1"/>
<line x1="133.5" y1="395.0" x2="133.5" y2="422.0" stroke="#00ffff" stroke-width="1"/>
<line x1="141.0" y1="435.5" x2="158.0" y2="435.5" stroke="#00ffff" stroke-width="1"/>
<line x1="150.5" y1="422.0" x2="150.5" y2="449.0" stroke="#00ffff" stroke-width="1"/>
<line x1="157.0" y1="430.5" x2="173.0" y2="430.5" stroke="#00ffff" stroke-width="1"/>
<line x1="165.5" y1="417.0" x2="165.5" y2="444.0" stroke="#00ffff" stroke-width="1"/>
<line x1="172.0" y1="400.5" x2="190.0" y2="400.5" stroke="#00ffff" stroke-width="1"/>
<line x1="181.5" y1="387.0" x2="181.5" y2="414.0" stroke="#00ffff" stroke-width="1"/>
<line x1="189.0" y1="416.5" x2="205.0" y2="416.5" stroke="#00ffff" stroke-width="1"/>
<line x1="197.5" y1="403.0" x2="197.5" y2="430.0" stroke="#00ffff" stroke-width="1"/>
<line x1="204.0" y1="415.5" x2="220.0" y2="415.5" stroke="#00ffff" stroke-width="1"/>
<line x1="212.5" y1="402.0" x2="212.5" y2="429.0" stroke="#00ffff" stroke-width="1"/>
<line x1="219.0" y1="404.5" x2="233.0" y2="404.5" stroke="#00ffff" stroke-width="1"/>
<line x1="226.5" y1="391.0" x2="226.5" y2="418.0" stroke="#00ffff" stroke-width="1"/>
<line x1="232.0" y1="414.5" x2="246.0" y2="414.5" stroke="#00ffff" stroke-width="1"/>
<line x1="239.5" y1="401.0" x2="239.5" y2="428.0" stroke="#00ffff" stroke-width="1"/>
<line x1="245.0" y1="410.5" x2="258.0" y2="410.5" stroke="#00ffff" stroke-width="1"/>
<line x1="251.5" y1="397.0" x2="251.5" y2="424.0" stroke="#00ffff" stroke-width="1"/>
<line x1="257.0" y1="425.5" x2="269.0" y2="425.5" stroke="#00ffff" stroke-width="1"/>
<line x1="263.5" y1="412.0" x2="263.5" y2="439.0" stroke="#00ffff" stroke-width="1"/>
<line x1="268.0" y1="413.5" x2="282.0" y2="413.5" stroke="#00ffff" stroke-width="1"/>
<line x1="275.5" y1="400.0" x2="275.5" y2="427.0" stroke="#00ffff" stroke-width="1"/>
<line x1="281.0" y1="412.5" x2="294.0" y2="412.5" stroke="#00ffff" stroke-width="1"/>
<line x1="287.5" y1="399.0" x2="287.5" y2="426.0" stroke="#00ffff" stroke-width="1"/>
<line x1="293.0" y1="407.5" x2="305.0" y2="407.5" stroke="#00ffff" stroke-width="1"/>
<line x1="298.5" y1="394.0" x2="298.5" y2="421.0" stroke="#00ffff" stroke-width="1"/>
<line x1="304.0" y1="427.5" x2="316.0" y2="427.5" stroke="#00ffff" stroke-width="1"/>
<line x1="309.5" y1="414.0" x2="309.5" y2="441.0" stroke="#00ffff" stroke-width="1"/>
<line x1="315.0" y1="417.5" x2="326.0" y2="417.5" stroke="#00ffff" stroke-width="1"/>
<line x1="320.5" y1="404.0" x2="320.5" y2="431.0" stroke="#00ffff" stroke-width="1"/>
<line x1="325.0" y1="421.5" x2="337.0" y2="421.5" stroke="#00ffff" stroke-width="1"/>
<line x1="331.5" y1="408.0" x2="331.5" y2="435.0" stroke="#00ffff" stroke-width="1"/>
<line x1="336.0" y1="444.5" x2="348.0" y2="444.5" stroke="#00ffff" stroke-width="1"/>
<line x1="342.5" y1="431.0" x2="342.5" y2="458.0" stroke="#00ffff" stroke-width="1"/>
<line x1="347.0" y1="382.5" x2="358.0" y2="382.5" stroke="#00ffff" stroke-width="1"/>
<line x1="352.5" y1="369.0" x2="352.5" y2="396.0" stroke="#00ffff" stroke-width="1"/>
<line x1="357.0" y1="411.5" x2="368.0" y2="411.5" stroke="#00ffff" stroke-width="1"/>
<line x1="362.5" y1="398.0" x2="362.5" y2="425.0" stroke="#00ffff" stroke-width="1"/>
<line x1="367.0" y1="401.5" x2="378.0" y2="401.5" stroke="#00ffff" stroke-width="1"/>
<line x1="372.5" y1="388.0" x2="372.5" y2="415.0" stroke="#00ffff" stroke-width="1"/>
<line x1="377.0" y1="442.5" x2="389.0" y2="442.5" stroke="#00ffff" stroke-width="1"/>
<line x1="382.5" y1="429.0" x2="382.5" y2="456.0" stroke="#00ffff" stroke-width="1"/>
<line x1="388.0" y1="434.5" x2="397.0" y2="434.5" stroke="#00ffff" stroke-width="1"/>
<line x1="392.5" y1="421.0" x2="392.5" y2="448.0" stroke="#00ffff" stroke-width="1"/>
<line x1="396.0" y1="418.5" x2="405.0" y2="418.5" stroke="#00ffff" stroke-width="1"/>
<line x1="400.5" y1="405.0" x2="400.5" y2="432.0" stroke="#00ffff" stroke-width="1"/>
<line x1="404.0" y1="404.5" x2="413.0" y2="404.5" stroke="#00ffff" stroke-width="1"/>
<line x1="408.5" y1="391.0" x2="408.5" y2="418.0" stroke="#00ffff" stroke-width="1"/>
<line x1="412.0" y1="426.5" x2="420.0" y2="426.5" stroke="#00ffff" stroke-width="1"/>
<line x1="415.5" y1="413.0" x2="415.5" y2="440.0" stroke="#00ffff" stroke-width="1"/>
<line x1="419.0" y1="425.5" x2="428.0" y2="425.5" stroke="#00ffff" stroke-width="1"/>
<line x1="423.5" y1="412.0" x2="423.5" y2="439.0" stroke="#00ffff" stroke-width="1"/>
<line x1="427.0" y1="420.5" x2="435.0" y2="420.5" stroke="#00ffff" stroke-width="1"/>
<line x1="430.5" y1="407.0" x2="430.5" y2="434.0" stroke="#00ffff" stroke-width="1"/>
<line x1="434.0" y1="411.5" x2="442.0" y2="411.5" stroke="#00ffff" stroke-width="1"/>
<line x1="438.5" y1="398.0" x2="438.5" y2="425.0" stroke="#00ffff" stroke-width="1"/>
<line x1="441.0" y1="415.5" x2="449.0" y2="415.5" stroke="#00ffff" stroke-width="1"/>
<line x1="445.5" y1="402.0" x2="445.5" y2="429.0" stroke="#00ffff" stroke-width="1"/>
<line x1="448.0" y1="416.5" x2="457.0" y2="416.5" stroke="#00ffff" stroke-width="1"/>
<line x1="452.5" y1="403.0" x2="452.5" y2="430.0" stroke="#00ffff" stroke-width="1"/>
<line x1="456.0" y1="418.5" x2="464.0" y2="418.5" stroke="#00ffff" stroke-width="1"/>
<line x1="459.5" y1="405.0" x2="459.5" y2="432.0" stroke="#00ffff" stroke-width="1"/>
<line x1="463.0" y1="407.5" x2="471.0" y2="407.5" stroke="#00ffff" stroke-width="1"/>
<line x1="466.5" y1="394.0" x2="466.5" y2="421.0" stroke="#00ffff" stroke-width="1"/>
<line x1="470.0" y1="424.5" x2="478.0" y2="424.5" stroke="#00ffff" stroke-width="1"/>
<line x1="473.5" y1="411.0" x2="473.5" y2="438.0" stroke="#00ffff" stroke-width="1"/>
<line x1="477.0" y1="414.5" x2="485.0" y2="414.5" stroke="#00ffff" stroke-width="1"/>
<line x1="480.5" y1="401.0" x2="480.5" y2="428.0" stroke="#00ffff" stroke-width="1"/>
<line x1="484.0" y1="404.5" x2="491.0" y2="404.5" stroke="#00ffff" stroke-width="1"/>
<line x1="487.5" y1="391.0" x2="487.5" y2="418.0" stroke="#00ffff" stroke-width="1"/>
<line x1="490.0" y1="428.5" x2="498.0" y2="428.5" stroke="#00ffff" stroke-width="1"/>
<line x1="494.5" y1="415.0" x2="494.5" y2="442.0" stroke="#00ffff" stroke-width="1"/>
<line x1="497.0" y1="415.5" x2="505.0" y2="415.5" stroke="#00ffff" stroke-width="1"/>
<line x1="500.5" y1="402.0" x2="500.5" y2="429.0" stroke="#00ffff" stroke-width="1"/>
<line x1="504.0" y1="429.5" x2="511.0" y2="429.5" stroke="#00ffff" stroke-width="1"/>
<line x1="507.5" y1="416.0" x2="507.5" y2="443.0" stroke="#00ffff" stroke-width="1"/>
<line x1="510.0" y1="438.5" x2="518.0" y2="438.5" stroke="#00ffff" stroke-width="1"/>
<line x1="513.5" y1="425.0" x2="513.5" y2="452.0" stroke="#00ffff" stroke-width="1"/>
<line x1="517.0" y1="417.5" x2="524.0" y2="417.5" stroke="#00ffff" stroke-width="1"/>
<line x1="520.5" y1="404.0" x2="520.5" y2="431.0" stroke="#00ffff" stroke-width="1"/>
<line x1="523.0" y1="428.5" x2="531.0" y2="428.5" stroke="#00ffff" stroke-width="1"/>
<line x1="526.5" y1="415.0" x2="526.5" y2="442.0" stroke="#00ffff" stroke-width="1"/>
<line x1="530.0" y1="431.5" x2="537.0" y2="431.5" stroke="#00ffff" stroke-width="1"/>
<line x1="533.5" y1="418.0" x2="533.5" y2="445.0" stroke="#00ffff" stroke-width="1"/>
<line x1="536.0" y1="432.5" x2="543.0" y2="432.5" stroke="#00ffff" stroke-width="1"/>
<line x1="539.5" y1="419.0" x2="539.5" y2="446.0" stroke="#00ffff" stroke-width="1"/>
<line x1="542.0" y1="408.5" x2="549.0" y2="408.5" stroke="#00ffff" stroke-width="1"/>
<line x1="545.5" y1="395.0" x2="545.5" y2="422.0" stroke="#00ffff" stroke-width="1"/>
<line x1="548.0" y1="409.5" x2="556.0" y2="409.5" stroke="#00ffff" stroke-width="1"/>
<line x1="552.5" y1="396.0" x2="552.5" y2="423.0" stroke="#00ffff" stroke-width="1"/>
<line x1="555.0" y1="408.5" x2="562.0" y2="408.5" stroke="#00ffff" stroke-width="1"/>
<line x1="558.5" y1="395.0" x2="558.5" y2="422.0" stroke="#00ffff" stroke-width="1"/>
<line x1="561.0" y1="413.5" x2="568.0" y2="413.5" stroke="#00ffff" stroke-width="1"/>
<line x1="564.5" y1="400.0" x2="564.5" y2="427.0" stroke="#00ffff" stroke-width="1"/>
<line x1="567.0" y1="416.5" x2="574.0" y2="416.5" stroke="#00ffff" stroke-width="1"/>
<line x1="570.5" y1="403.0" x2="570.5" y2="430.0" stroke="#00ffff" stroke-width="1"/>
<line x1="84.0" y1="403.5" x2="106.0" y2="403.5" stroke="#ffff00" stroke-width="1"/>
<line x1="95.5" y1="390.0" x2="95.5" y2="417.0" stroke="#ffff00" stroke-width="1"/>
<line x1="105.0" y1="400.5" x2="125.0" y2="400.5" stroke="#ffff00" stroke-width="1"/>
<line x1="115.5" y1="387.0" x2="115.5" y2="414.0" stroke="#ffff00" stroke-width="1"/>
<line x1="124.0" y1="420.5" x2="142.0" y2="420.5" stroke="#ffff00" stroke-width="1"/>
<line x1="133.5" y1="407.0" x2="133.5" y2="434.0" stroke="#ffff00" stroke-width="1"/>
<line x1="141.0" y1="430.5" x2="158.0" y2="430.5" stroke="#ffff00" stroke-width="1"/>
<line x1="150.5" y1="417.0" x2="150.5" y2="444.0" stroke="#ffff00" stroke-width="1"/>
<line x1="157.0" y1="432.5" x2="173.0" y2="432.5" stroke="#ffff00" stroke-width="1"/>
<line x1="165.5" y1="419.0" x2="165.5" y2="446.0" stroke="#ffff00" stroke-width="1"/>
<line x1="172.0" y1="453.5" x2="190.0" y2="453.5" stroke="#ffff00" stroke-width="1"/>
<line x1="181.5" y1="440.0" x2="181.5" y2="467.0" stroke="#ffff00" stroke-width="1"/>
<line x1="189.0" y1="396.5" x2="205.0" y2="396.5" stroke="#ffff00" stroke-width="1"/>
<line x1="197.5" y1="383.0" x2="197.5" y2="410.0" stroke="#ffff00" stroke-width="1"/>
<line x1="204.0" y1="429.5" x2="220.0" y2="429.5" stroke="#ffff00" stroke-width="1"/>
<line x1="212.5" y1="416.0" x2="212.5" y2="443.0" stroke="#ffff00" stroke-width="1"/>
<line x1="219.0" y1="426.5" x2="233.0" y2="426.5" stroke="#ffff00" stroke-width="1"/>
<line x1="226.5" y1="413.0" x2="226.5" y2="440.0" stroke="#ffff00" stroke-width="1"/>
<line x1="232.0" y1="428.5" x2="246.0" y2="428.5" stroke="#ffff00" stroke-width="1"/>
<line x1="239.5" y1="415.0" x2="239.5" y2="442.0" stroke="#ffff00" stroke-width="1"/>
<line x1="245.0" y1="421.5" x2="258.0" y2="421.5" stroke="#ffff00" stroke-width="1"/>
<line x1="251.5" y1="408.0" x2="251.5" y2="435.0" stroke="#ffff00" stroke-width="1"/>
<line x1="257.0" y1="429.5" x2="269.0" y2="429.5" stroke="#ffff00" stroke-width="1"/>
<line x1="263.5" y1="416.0" x2="263.5" y2="443.0" stroke="#ffff00" stroke-width="1"/>
<line x1="268.0" y1="430.5" x2="282.0" y2="430.5" stroke="#ffff00" stroke-width="1"/>
<line x1="275.5" y1="417.0" x2="275.5" y2="444.0" stroke="#ffff00" stroke-width="1"/>
<line x1="281.0" y1="401.5" x2="294.0" y2="401.5" stroke="#ffff00" stroke-width="1"/>
<line x1="287.5" y1="388.0" x2="287.5" y2="415.0" stroke="#ffff00" stroke-width="1"/>
<line x1="293.0" y1="445.5" x2="305.0" y2="445.5" stroke="#ffff00" stroke-width="1"/>
<line x1="298.5" y1="432.0" x2="298.5" y2="459.0" stroke="#ffff00" stroke-width="1"/>
<line x1="304.0" y1="432.5" x2="316.0" y2="432.5" stroke="#ffff00" stroke-width="1"/>
<line x1="309.5" y1="419.0" x2="309.5" y2="446.0" stroke="#ffff00" stroke-width="1"/>
<line x1="315.0" y1="411.5" x2="326.0" y2="411.5" stroke="#ffff00" stroke-width="1"/>
<line x1="320.5" y1="398.0" x2="320.5" y2="425.0" stroke="#ffff00" stroke-width="1"/>
<line x1="325.0" y1="426.5" x2="337.0" y2="426.5" stroke="#ffff00" stroke-width="1"/>
<line x1="331.5" y1="413.0" x2="331.5" y2="440.0" stroke="#ffff00" stroke-width="1"/>
<line x1="336.0" y1="417.5" x2="348.0" y2="417.5" stroke="#ffff00" stroke-width="1"/>
<line x1="342.5" y1="404.0" x2="342.5" y2="431.0" stroke="#ffff00" stroke-width="1"/>
<line x1="347.0" y1="419.5" x2="358.0" y2="419.5" stroke="#ffff00" stroke-width="1"/>
<line x1="352.5" y1="406.0" x2="352.5" y2="433.0" stroke="#ffff00" stroke-width="1"/>
<line x1="357.0" y1="417.5" x2="368.0" y2="417.5" stroke="#ffff00" stroke-width="1"/>
<line x1="362.5" y1="404.0" x2="362.5" y2="431.0" stroke="#ffff00" stroke-width="1"/>
<line x1="367.0" y1="418.5" x2="378.0" y2="418.5" stroke="#ffff00" stroke-width="1"/>
<line x1="372.5" y1="405.0" x2="372.5" y2="432.0" stroke="#ffff00" stroke-width="1"/>
<line x1="377.0" y1="432.5" x2="389.0" y2="432.5" stroke="#ffff00" stroke-width="1"/>
<line x1="382.5" y1="419.0" x2="382.5" y2="446.0" stroke="#ffff00" stroke-width="1"/>
<line x1="388.0" y1="428.5" x2="397.0" y2="428.5" stroke="#ffff00" stroke-width="1"/>
<line x1="392.5" y1="415.0" x2="392.5" y2="442.0" stroke="#ffff00" stroke-width="1"/>
<line x1="396.0" y1="431.5" x2="405.0" y2="431.5" stroke="#ffff00" stroke-width="1"/>
<line x1="400.5" y1="418.0" x2="400.5" y2="445.0" stroke="#ffff00" stroke-width="1"/>
<line x1="404.0" y1="417.5" x2="413.0" y2="417.5" stroke="#ffff00" stroke-width="1"/>
<line x1="408.5" y1="404.0" x2="408.5" y2="431.0" stroke="#ffff00" stroke-width="1"/>
<line x1="412.0" y1="414.5" x2="420.0" y2="414.5" stroke="#ffff00" stroke-width="1"/>
<line x1="415.5" y1="401.0" x2="415.5" y2="428.0" stroke="#ffff00" stroke-width="1"/>
<line x1="419.0" y1="421.5" x2="428.0" y2="421.5" stroke="#ffff00" stroke-width="1"/>
<line x1="423.5" y1="408.0" x2="423.5" y2="435.0" stroke="#ffff00" stroke-width="1"/>
<line x1="427.0" y1="396.5" x2="435.0" y2="396.5" stroke="#ffff00" stroke-width="1"/>
<line x1="430.5" y1="383.0" x2="430.5" y2="410.0" stroke="#ffff00" stroke-width="1"/>
<line x1="434.0" y1="423.5" x2="442.0" y2="423.5" stroke="#ffff00" stroke-width="1"/>
<line x1="438.5" y1="410.0" x2="438.5" y2="437.0" stroke="#ffff00" stroke-width="1"/>
<line x1="441.0" y1="437.5" x2="449.0" y2="437.5" stroke="#ffff00" stroke-width="1"/>
<line x1="445.5" y1="424.0" x2="445.5" y2="451.0" stroke="#ffff00" stroke-width="1"/>
<line x1="448.0" y1="412.5" x2="457.0" y2="412.5" stroke="#ffff00" stroke-width="1"/>
<line x1="452.5" y1="399.0" x2="452.5" y2="426.0" stroke="#ffff00" stroke-width="1"/>
<line x1="456.0" y1="400.5" x2="464.0" y2="400.5" stroke="#ffff00" stroke-width="1"/>
<line x1="459.5" y1="387.0" x2="459.5" y2="414.0" stroke="#ffff00" stroke-width="1"/>
<line x1="463.0" y1="412.5" x2="471.0" y2="412.5" stroke="#ffff00" stroke-width="1"/>
<line x1="466.5" y1="399.0" x2="466.5" y2="426.0" stroke="#ffff00" stroke-width="1"/>
<line x1="470.0" y1="422.5" x2="478.0" y2="422.5" stroke="#ffff00" stroke-width="1"/>
<line x1="473.5" y1="409.0" x2="473.5" y2="436.0" stroke="#ffff00" stroke-width="1"/>
<line x1="477.0" y1="431.5" x2="485.0" y2="431.5" stroke="#ffff00" stroke-width="1"/>
<line x1="480.5" y1="418.0" x2="480.5" y2="445.0" stroke="#ffff00" stroke-width="1"/>
<line x1="484.0" y1="432.5" x2="491.0" y2="432.5" stroke="#ffff00" stroke-width="1"/>
<line x1="487.5" y1="419.0" x2="487.5" y2="446.0" stroke="#ffff00" stroke-width="1"/>
<line x1="490.0" y1="425.5" x2="498.0" y2="425.5" stroke="#ffff00" stroke-width="1"/>
<line x1="494.5" y1="412.0" x2="494.5" y2="439.0" stroke="#ffff00" stroke-width="1"/>
<line x1="497.0" y1="443.5" x2="505.0" y2="443.5" stroke="#ffff00" stroke-width="1"/>
<line x1="500.5" y1="430.0" x2="500.5" y2="457.0" stroke="#ffff00" stroke-width="1"/>
<line x1="504.0" y1="411.5" x2="511.0" y2="411.5" stroke="#ffff00" stroke-width="1"/>
<line x1="507.5" y1="398.0" x2="507.5" y2="425.0" stroke="#ffff00" stroke-width="1"/>
<line x1="510.0" y1="431.5" x2="518.0" y2="431.5" stroke="#ffff00" stroke-width="1"/>
<line x1="513.5" y1="418.0" x2="513.5" y2="445.0" stroke="#ffff00" stroke-width="1"/>
<line x1="517.0" y1="414.5" x2="524.0" y2="414.5" stroke="#ffff00" stroke-width="1"/>
<line x1="520.5" y1="401.0" x2="520.5" y2="428.0" stroke="#ffff00" stroke-width="1"/>
<line x1="523.0" y1="409.5" x2="531.0" y2="409.5" stroke="#ffff00" stroke-width="1"/>
<line x1="526.5" y1="396.0" x2="526.5" y2="423.0" stroke="#ffff00" stroke-width="1"/>
<line x1="530.0" y1="419.5" x2="537.0" y2="419.5" stroke="#ffff00" stroke-width="1"/>
<line x1="533.5" y1="406.0" x2="533.5" y2="433.0" stroke="#ffff00" stroke-width="1"/>
<line x1="536.0" y1="432.5" x2="543.0" y2="432.5" stroke="#ffff00" stroke-width="1"/>
<line x1="539.5" y1="419.0" x2="539.5" y2="446.0" stroke="#ffff00" stroke-width="1"/>
<line x1="542.0" y1="417.5" x2="549.0" y2="417.5" stroke="#ffff00" stroke-width="1"/>
<line x1="545.5" y1="404.0" x2="545.5" y2="431.0" stroke="#ffff00" stroke-width="1"/>
<line x1="548.0" y1="426.5" x2="556.0" y2="426.5" stroke="#ffff00" stroke-width="1"/>
<line x1="552.5" y1="413.0" x2="552.5" y2="440.0" stroke="#ffff00" stroke-width="1"/>
<line x1="555.0" y1="438.5" x2="562.0" y2="438.5" stroke="#ffff00" stroke-width="1"/>
<line x1="558.5" y1="425.0" x2="558.5" y2="452.0" stroke="#ffff00" stroke-width="1"/>
<line x1="561.0" y1="415.5" x2="568.0" y2="415.5" stroke="#ffff00" stroke-width="1"/>
<line x1="564.5" y1="402.0" x2="564.5" y2="429.0" stroke="#ffff00" stroke-width="1"/>
<line x1="567.0" y1="428.5" x2="574.0" y2="428.5" stroke="#ffff00" stroke-width="1"/>
<line x1="570.5" y1="415.0" x2="570.5" y2="442.0" stroke="#ffff00" stroke-width="1"/>
<line x1="573.0" y1="401.5" x2="581.0" y2="401.5" stroke="#ffff00" stroke-width="1"/>
<line x1="576.5" y1="388.0" x2="576.5" y2="415.0" stroke="#ffff00" stroke-width="1"/>
</g>
<line x1="72" y1="420.5" x2="582" y2="420.5" stroke="#ff0000" stroke-width="1" stroke-dasharray="1 5" shape-rendering="crispEdges"/>
<polyline points="84.5,76.5 105.5,76.5 105.5,66.5 124.5,66.5 124.5,57.5 141.5,57.5 141.5,50.5 157.5,50.5 157.5,45.5 172.5,45.5 172.5,41.5 189.5,41.5 189.5,39.5 204.5,39.5 204.5,37.5 219.5,37.5 219.5,37.5 232.5,37.5 232.5,37.5 245.5,37.5 245.5,38.5 257.5,38.5 257.5,40.5 268.5,40.5 268.5,42.5 281.5,42.5 281.5,45.5 293.5,45.5 293.5,48.5 304.5,48.5 304.5,52.5 315.5,52.5 315.5,56.5 325.5,56.5 325.5,60.5 336.5,60.5 336.5,66.5 347.5,66.5 347.5,70.5 357.5,70.5 357.5,77.5 367.5,77.5 367.5,83.5 377.5,83.5 377.5,91.5 388.5,91.5 388.5,99.5 396.5,99.5 396.5,105.5 404.5,105.5 404.5,112.5 412.5,112.5 412.5,118.5 419.5,118.5 419.5,124.5 427.5,124.5 427.5,131.5 434.5,131.5 434.5,138.5 441.5,138.5 441.5,146.5 448.5,146.5 448.5,153.5 456.5,153.5 456.5,161.5 463.5,161.5 463.5,169.5 470.5,169.5 470.5,178.5 477.5,178.5 477.5,187.5 484.5,187.5 484.5,196.5 490.5,196.5 490.5,205.5 497.5,205.5 497.5,214.5 504.5,214.5 504.5,224.5 510.5,224.5 510.5,235.5 517.5,235.5 517.5,245.5 523.5,245.5 523.5,256.5 530.5,256.5 530.5,267.5 536.5,267.5 536.5,279.5 542.5,279.5 542.5,291.5 548.5,291.5 548.5,304.5 555.5,304.5 555.5,316.5 561.5,316.5 561.5,330.5 567.5,330.5 567.5,344.5 573.5,344.5 573.5,357.5 580.5,357.5" fill="none" stroke="#ff0000" stroke-width="1" shape-rendering="crispEdges"/>
<ellipse cx="95" cy="52.5" rx="2.5" ry="3" fill="none" stroke="#ffff00" stroke-width="1" shape-rendering="crispEdges"/>
<ellipse cx="115" cy="48.5" rx="2.5" ry="3" fill="none" stroke="#ffff00" stroke-width="1" shape-rendering="crispEdges"/>
<ellipse cx="133" cy="57.5" rx="2.5" ry="3" fill="none" stroke="#ffff00" stroke-width="1" shape-rendering="crispEdges"/>
<ellipse cx="165" cy="53.5" rx="2.5" ry="3" fill="none" stroke="#ffff00" stroke-width="1" shape-rendering="crispEdges"/>
<ellipse cx="197" cy="32.5" rx="2.5" ry="3" fill="none" stroke="#ffff00" stroke-width="1" shape-rendering="crispEdges"/>
<ellipse cx="212" cy="40.5" rx="2.5" ry="3" fill="none" stroke="#ffff00" stroke-width="1" shape-rendering="crispEdges"/>
<ellipse cx="226" cy="39.5" rx="2.5" ry="3" fill="none" stroke="#ffff00" stroke-width="1" shape-rendering="crispEdges"/>
<ellipse cx="239" cy="40.5" rx="2.5" ry="3" fill="none" stroke="#ffff00" stroke-width="1" shape-rendering="crispEdges"/>
<ellipse cx="251" cy="39.5" rx="2.5" ry="3" fill="none" stroke="#ffff00" stroke-width="1" shape-rendering="crispEdges"/>
<ellipse cx="263" cy="45.5" rx="2.5" ry="3" fill="none" stroke="#ffff00" stroke-width="1" shape-rendering="crispEdges"/>
<ellipse cx="275" cy="48.5" rx="2.5" ry="3" fill="none" stroke="#ffff00" stroke-width="1" shape-rendering="crispEdges"/>
<ellipse cx="287" cy="37.5" rx="2.5" ry="3" fill="none" stroke="#ffff00" stroke-width="1" shape-rendering="crispEdges"/>
<ellipse cx="320" cy="49.5" rx="2.5" ry="3" fill="none" stroke="#ffff00" stroke-width="1" shape-rendering="crispEdges"/>
<ellipse cx="430" cy="59.5" rx="2.5" ry="3" fill="none" stroke="#ffff00" stroke-width="1" shape-rendering="crispEdges"/>
<ellipse cx="459" cy="63.5" rx="2.5" ry="3" fill="none" stroke="#ffff00" stroke-width="1" shape-rendering="crispEdges"/>
<ellipse cx="576" cy="74.5" rx="2.5" ry="3" fill="none" stroke="#ffff00" stroke-width="1" shape-rendering="crispEdges"/>
<g shape-rendering="crispEdges">
<line x1="561.0" y1="46.5" x2="568.0" y2="46.5" stroke="#00ffff" stroke-width="1"/>
<line x1="564.5" y1="43.0" x2="564.5" y2="50.0" stroke="#00ffff" stroke-width="1"/>
</g>
<ellipse cx="564" cy="58.5" rx="2.5" ry="3" fill="none" stroke="#ffff00" stroke-width="1" shape-rendering="crispEdges"/>
<g style="filter:grayscale(1)">
<text x="570" y="21" font-size="9" text-anchor="end" font-family="'Liberation Sans', sans-serif" fill="#fff" stroke="#fff" stroke-width="0.15" textLength="90" lengthAdjust="spacingAndGlyphs">Times: -5.554: 2.638 s</text>
<text x="524" y="50" font-size="10" text-anchor="start" font-family="'Liberation Sans', sans-serif" fill="#fff" stroke="#fff" stroke-width="0.15" textLength="33">NAI<tspan dy="-1.6">_</tspan><tspan dy="1.6">08</tspan></text>
<text x="524" y="62" font-size="10" text-anchor="start" font-family="'Liberation Sans', sans-serif" fill="#fff" stroke="#fff" stroke-width="0.15" textLength="31">NAI<tspan dy="-1.6">_</tspan><tspan dy="1.6">11</tspan></text>
<text x="327" y="501" font-size="10.5" text-anchor="middle" font-family="'Liberation Sans', sans-serif" fill="#fff" stroke="#fff" stroke-width="0.15" textLength="63">Energy (keV)</text>
<text x="167.5" y="488" font-size="10" text-anchor="middle" font-family="'Liberation Sans', sans-serif" fill="#fff" stroke="#fff" stroke-width="0.15" >10</text>
<text x="569.5" y="488" font-size="10" text-anchor="middle" font-family="'Liberation Sans', sans-serif" fill="#fff" stroke="#fff" stroke-width="0.15" textLength="18">100</text>
<text x="69" y="64.1" font-size="10" text-anchor="end" font-family="'Liberation Sans', sans-serif" fill="#fff" stroke="#fff" stroke-width="0.15">10<tspan font-size="7" dy="-4.5">0</tspan></text>
<text x="69" y="132.6" font-size="10" text-anchor="end" font-family="'Liberation Sans', sans-serif" fill="#fff" stroke="#fff" stroke-width="0.15">10<tspan font-size="7" dy="-4.5">−2</tspan></text>
<text x="69" y="201.1" font-size="10" text-anchor="end" font-family="'Liberation Sans', sans-serif" fill="#fff" stroke="#fff" stroke-width="0.15">10<tspan font-size="7" dy="-4.5">−4</tspan></text>
<text x="69" y="269.6" font-size="10" text-anchor="end" font-family="'Liberation Sans', sans-serif" fill="#fff" stroke="#fff" stroke-width="0.15">10<tspan font-size="7" dy="-4.5">−6</tspan></text>
<text x="69" y="338.1" font-size="10" text-anchor="end" font-family="'Liberation Sans', sans-serif" fill="#fff" stroke="#fff" stroke-width="0.15">10<tspan font-size="7" dy="-4.5">−8</tspan></text>
<text x="68.5" y="375" font-size="10" text-anchor="end" font-family="'Liberation Sans', sans-serif" fill="#fff" stroke="#fff" stroke-width="0.15" >4</text>
<text x="68.5" y="398" font-size="10" text-anchor="end" font-family="'Liberation Sans', sans-serif" fill="#fff" stroke="#fff" stroke-width="0.15" >2</text>
<text x="68.5" y="424.5" font-size="10" text-anchor="end" font-family="'Liberation Sans', sans-serif" fill="#fff" stroke="#fff" stroke-width="0.15" >0</text>
<text x="68.5" y="451" font-size="10" text-anchor="end" font-family="'Liberation Sans', sans-serif" fill="#fff" stroke="#fff" stroke-width="0.15" >−2</text>
<text x="68.5" y="473" font-size="10" text-anchor="end" font-family="'Liberation Sans', sans-serif" fill="#fff" stroke="#fff" stroke-width="0.15" >−4</text>
<text transform="translate(38.5,197) rotate(-90)" font-size="10.5" text-anchor="middle" textLength="119" font-family="'Liberation Sans', sans-serif" fill="#fff" stroke="#fff" stroke-width="0.15">Rate (counts s<tspan font-size="7" dy="-4">−1</tspan><tspan dy="4"> keV</tspan><tspan font-size="7" dy="-4">−1</tspan><tspan dy="4">)</tspan></text>
<text transform="translate(46.5,420.5) rotate(-90)" font-size="10.5" text-anchor="middle" font-family="'Liberation Sans', sans-serif" fill="#fff" stroke="#fff" stroke-width="0.15">Sigma</text>
</g>
</svg></body></html>
